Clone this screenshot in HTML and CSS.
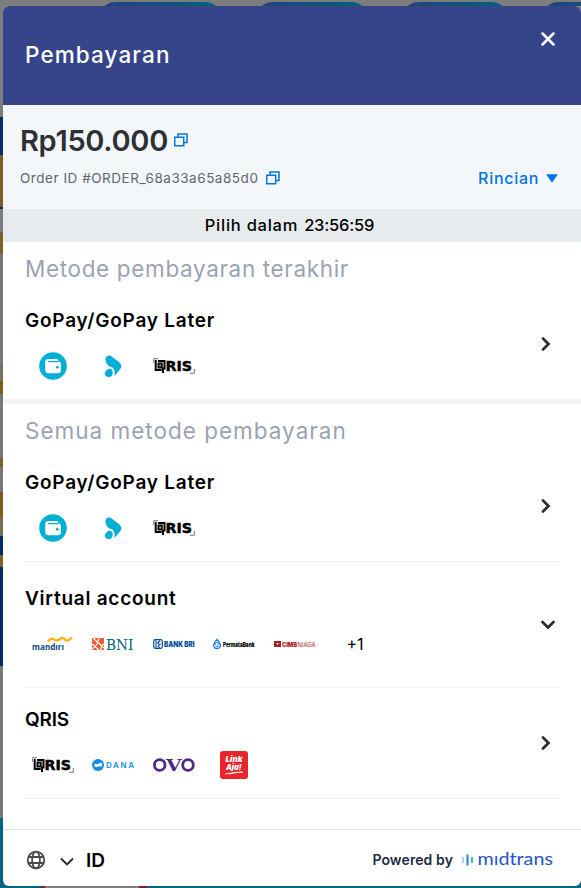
FILE: index.html
```html
<!DOCTYPE html>
<html lang="id">
<head>
    <meta charset="UTF-8">
    <meta name="viewport" content="width=device-width, initial-scale=1.0">
    <title>Pembayaran</title>
    <link rel="stylesheet" href="styles.css">
</head>
<body>
<!-- shared icons -->
<svg class="defs" width="0" height="0">
    <symbol id="copy" viewBox="0 0 14 14">
        <path d="M4 3.500V1h9v8.500h-2.500M.7 4.200h9v8.600h-9z" fill="none" stroke="#0077e0" stroke-width="1.500"/>
    </symbol>
    <symbol id="chevron" viewBox="0 0 16 16">
        <path d="M5 2.500 10.500 8 5 13.500" fill="none" stroke="#2b2d33" stroke-width="2.700" stroke-linecap="round"/>
    </symbol>
    <symbol id="gopay" viewBox="0 0 28 28">
        <circle cx="14" cy="14" r="13.800" fill="#00aed6"/>
        <path d="M9.500 7h8q2 0 2 2.300 2.500.300 2.500 3v5.500q0 3.500-3.500 3.500H9.700q-3.500 0-3.500-3.500v-7.500Q6.200 7 9.500 7z" fill="#fff"/>
        <path d="M9.500 9.700h9.500" stroke="#00aed6" stroke-width="1.200" stroke-linecap="round"/>
        <circle cx="18.300" cy="15.300" r="1.400" fill="#00aed6"/>
    </symbol>
    <symbol id="later" viewBox="0 0 18 22">
        <path d="M1.500 5C1 1.500 4-.5 7 1l8.500 6.500q3.500 3.500.500 7L10.500 21q.800-6.500-2.500-8.700Q2.500 11.500 1.500 5z" fill="#00aed6"/>
        <path d="M5.500 13.500q3.500.500 3.200 4.500-.200 4-4 4-3.700-.300-4-3.500Q2 14.500 5.500 13.500z" fill="#00aed6"/>
    </symbol>
    <symbol id="qris" viewBox="0 0 42 16">
        <path d="M.7 5V.7H5M41.300 11v4.300H37" fill="none" stroke="#777" stroke-width="1"/>
        <path d="M2.700 2v10h6M5 3h6.500v8.500M5.500 5.500v4h3.200v-4z M10 9.500V15" fill="none" stroke="#000" stroke-width="2"/>
        <text x="12.500" y="13" textLength="26.500" lengthAdjust="spacingAndGlyphs" class="qris-text">RIS</text>
    </symbol>
</svg>

<!-- page buttons peeking out above the dialog -->
<div class="pills">
    <i></i><i></i><i></i><i></i>
</div>

<div class="modal">
    <header class="header">
        <h1>Pembayaran</h1>
        <svg class="close" viewBox="0 0 14 14"><path d="M1.500 1.500l11 11M12.500 1.500l-11 11" stroke="#fff" stroke-width="2.500" stroke-linecap="round"/></svg>
    </header>

    <section class="summary">
        <div class="amount"><span>Rp150.000</span><svg class="copy"><use href="#copy"/></svg></div>
        <div class="order">
            <span class="order-id">Order ID #ORDER_68a33a65a85d0</span><svg class="copy"><use href="#copy"/></svg>
            <a class="detail"><span>Rincian</span><svg width="12" height="9" viewBox="0 0 12 9"><path d="M1 .8h10L6 8z" fill="#0077e0" stroke="#0077e0" stroke-linejoin="round"/></svg></a>
        </div>
    </section>

    <div class="timer"><span>Pilih dalam</span><span class="time">23:56:59</span></div>

    <main>
        <section class="group recent">
            <h2>Metode pembayaran terakhir</h2>
            <div class="method">
                <div>
                    <h3>GoPay/GoPay Later</h3>
                    <div class="logos">
                        <svg class="round"><use href="#gopay"/></svg>
                        <svg class="later"><use href="#later"/></svg>
                        <svg class="qris"><use href="#qris"/></svg>
                    </div>
                </div>
                <svg class="chevron"><use href="#chevron"/></svg>
            </div>
        </section>

        <section class="group">
            <h2 class="all">Semua metode pembayaran</h2>
            <div class="method">
                <div>
                    <h3>GoPay/GoPay Later</h3>
                    <div class="logos">
                        <svg class="round"><use href="#gopay"/></svg>
                        <svg class="later"><use href="#later"/></svg>
                        <svg class="qris"><use href="#qris"/></svg>
                    </div>
                </div>
                <svg class="chevron"><use href="#chevron"/></svg>
            </div>

            <div class="method bank">
                <div>
                    <h3>Virtual account</h3>
                    <div class="logos">
                        <svg class="logo" viewBox="0 0 42 16">
                            <path d="M16 5.500q3-4 6-2t6-.500 5 .500 7-2" fill="none" stroke="#fcb017" stroke-width="2.400"/>
                            <text x="0" y="13.500" textLength="32" lengthAdjust="spacingAndGlyphs" class="mandiri">mandırı</text>
                        </svg>
                        <svg class="logo" viewBox="0 0 42 16">
                            <path d="M0 2h12v12H0z" fill="#f15a33"/>
                            <path d="M1 2l11 10M0 8l7 6M7 2Q6 9 0 13M9 14q0-5 3-6" stroke="#fff" stroke-width="1.100" fill="none"/>
                            <text x="14" y="13.500" textLength="27.500" lengthAdjust="spacingAndGlyphs" class="bni">BNI</text>
                        </svg>
                        <svg class="logo" viewBox="0 0 42 16">
                            <rect x=".7" y="3.700" width="8.600" height="8.600" rx="1.500" fill="#fff" stroke="#00529c" stroke-width="1.200"/>
                            <path d="M3 4v8M7 4.500 4.500 7 7 8.500 5 10l2 2" stroke="#00529c" fill="none" stroke-width="1.100"/>
                            <text x="11" y="10.800" textLength="30.500" lengthAdjust="spacingAndGlyphs" class="bri">BANK BRI</text>
                        </svg>
                        <svg class="logo" viewBox="0 0 42 16">
                            <path d="M4 3.500Q-.2 8 .7 10.300 2 12.500 4 12.500t3.300-2.200Q8.200 8 4 3.500z" fill="#fff" stroke="#1478ff" stroke-width="1.300"/>
                            <path d="M2 8l2 3 2-3-2-2z" fill="none" stroke="#1478ff" stroke-width=".8"/>
                            <text x="10" y="10.700" textLength="31.500" lengthAdjust="spacingAndGlyphs" class="permata">PermataBank</text>
                        </svg>
                        <svg class="logo" viewBox="0 0 42 16">
                            <path d="M0 5h7v6H0z" fill="#a71b26"/><path d="M2 7h3L3.500 9z" fill="#fff"/>
                            <text x="8" y="10.600" textLength="15" lengthAdjust="spacingAndGlyphs" class="cimb">CIMB</text>
                            <text x="23.500" y="10.600" textLength="18" lengthAdjust="spacingAndGlyphs" class="niaga">NIAGA</text>
                        </svg>
                        <span class="more">+1</span>
                    </div>
                </div>
                <svg class="chevron down"><use href="#chevron"/></svg>
            </div>

            <div class="method wallet">
                <div>
                    <h3>QRIS</h3>
                    <div class="logos">
                        <svg class="qris"><use href="#qris"/></svg>
                        <svg class="logo" viewBox="0 0 42 16">
                            <circle cx="6" cy="8" r="6" fill="#118eea"/>
                            <path d="M2.500 6.500q2.500 1.500 5-.300 1.500-.700 2.500 0v3.300q-2.300-.800-4.500.300-1.700.600-3-.300z" fill="#fff"/>
                            <text x="14" y="11" textLength="28" class="dana">DANA</text>
                        </svg>
                        <svg class="logo" viewBox="0 0 42 16">
                            <g fill="none" stroke="#4c2a86" stroke-width="2.800"><circle cx="6.700" cy="8" r="5.300"/><circle cx="35" cy="8" r="5.300"/></g>
                            <text x="13" y="13.700" textLength="15.500" lengthAdjust="spacingAndGlyphs" class="ovo">V</text>
                        </svg>
                        <svg class="round" viewBox="0 0 28 28">
                            <rect width="28" height="28" rx="3" fill="#e8252b"/>
                            <text x="5.500" y="10.700" textLength="17" lengthAdjust="spacingAndGlyphs" class="aja">Link</text>
                            <text x="6" y="19" textLength="15.500" lengthAdjust="spacingAndGlyphs" class="aja">Aja!</text>
                            <path d="M5 23q9-2 18-2-9 .700-14 2" fill="none" stroke="#fff" stroke-width=".8"/>
                        </svg>
                    </div>
                </div>
                <svg class="chevron"><use href="#chevron"/></svg>
            </div>
        </section>
    </main>

    <footer class="footer">
        <svg class="globe" viewBox="0 0 20 20"><g fill="none" stroke="#4a4a4a" stroke-width="1.800"><circle cx="10" cy="10" r="8.300"/><ellipse cx="10" cy="10" rx="3.900" ry="8.300"/><path d="M2.500 7h15M2.500 13h15"/></g></svg>
        <svg class="caret" viewBox="0 0 14 9"><path d="M1 1.500l6 6 6-6" fill="none" stroke="#222b38" stroke-width="1.900"/></svg>
        <span class="lang">ID</span>
        <span class="powered">Powered by</span>
        <svg class="midtrans" viewBox="0 0 92 16">
            <path d="M1 5v6" stroke="#8fd0f5" stroke-width="1.700"/>
            <path d="M5.500 2.500v11" stroke="#2a7fc4" stroke-width="2"/>
            <path d="M10 5v6" stroke="#10b7e8" stroke-width="1.800"/>
            <text x="15.500" y="12.500" textLength="75.500" lengthAdjust="spacingAndGlyphs">mıdtrans</text>
        </svg>
    </footer>
</div>
</body>
</html>
```
FILE: styles.css
```css
* {
    margin: 0; padding: 0; box-sizing: border-box;
}

body {
    height: 888px;
    padding: 0 0 2px 3px;
    overflow: hidden;
    font-family: Inter, "Open Sans", sans-serif;
    color: #000;
    /* dimmed page behind the dialog */
    background:
        linear-gradient(90deg, transparent 41px, #7d1f24 41px 45px, #7d7d80 45px 139px, #7d1f24 139px 147px, transparent 147px) 0 886px / 100% 2px no-repeat,
        linear-gradient(#7d7d7d 117px, #002e68 117px 155px, #7d5d24 155px 207px, #0a2b55 207px 209px, #7d7d80 209px 232px, #80602a 232px 254px, #77777c 254px 363px, #7b705f 363px 381px, #805c1c 381px 394px, #77777c 394px 458px, #80602a 458px 467px, #77777c 467px 492px, #805c1c 492px 517px, #776b59 517px 536px, #002c62 536px 555px, #80602a 555px 567px, #002b63 567px 666px, #77777c 666px 818px, #00657f 818px);
}

h1, h2, h3 {
    white-space: nowrap;
}

svg {
    flex: none;
    overflow: visible;
}

.defs {
    display: none;
}

.pills {
    height: 6px;
    padding: 2px 0 0 95px;
    display: grid;
    grid-template-columns: 125px 114px 108px 120px;
    column-gap: 32px;
    overflow: hidden;
}

.pills i {
    height: 40px;
    border-radius: 18px;
    background: linear-gradient(90deg, #273f7a, #006482);
}

.modal {
    height: 880px;
    display: flex;
    flex-direction: column;
    background-color: #fff;
    border-radius: 6px;
    overflow: hidden;
}

.header {
    height: 99px;
    padding: 0 26px 0 22px;
    display: flex;
    justify-content: space-between;
    background-color: #364589;
    color: #fff;
}

.header h1 {
    font-size: 22.5px;
    font-weight: 500;
    line-height: 97px;
    letter-spacing: 1.1px;
}

.close {
    width: 14px;
    height: 14px;
    margin-top: 26px;
}

.summary {
    height: 104px;
    padding: 15px 23px 0 17px;
    background-color: #f3f7fa;
}

.amount {
    height: 40px;
    display: flex;
    align-items: center;
    gap: 6px;
    color: #2e3035;
    font-size: 29px;
    font-weight: 600;
    letter-spacing: -0.3px;
}

.copy {
    width: 14px;
    height: 14px;
}

.order {
    height: 36px;
    display: flex;
    align-items: center;
    color: #61656f;
    font-size: 13.5px;
}

.order-id {
    width: 246px;
    letter-spacing: 0.53px;
    white-space: nowrap;
}

.detail {
    margin-left: auto;
    display: flex;
    align-items: center;
    gap: 7px;
    color: #0077e0;
    font-size: 16px;
    font-weight: 500;
    letter-spacing: 0.7px;
}

.timer {
    height: 33px;
    padding: 0 5px 2px 0;
    display: flex;
    justify-content: center;
    align-items: center;
    gap: 6px;
    background-color: #e8ebed;
    font-size: 16.5px;
    font-weight: 500;
    letter-spacing: 0.75px;
}

.time {
    letter-spacing: -0.2px;
}

main {
    flex: 1;
}

.group {
    padding: 0 22px;
}

.recent {
    height: 162px;
    border-bottom: 5px solid #f2f4f6;
}

.group h2 {
    height: 43px;
    padding-top: 11px;
    color: #9da2b0;
    font-size: 22.5px;
    font-weight: 400;
    line-height: 32px;
    letter-spacing: 0.65px;
}

.group .all {
    letter-spacing: 1px;
}

.method {
    height: 115px;
    padding: 21px 5px 0 0;
    display: flex;
    justify-content: space-between;
    border-bottom: 1px solid #eff0f2;
}

.recent .method {
    height: 114px;
    border-bottom: 0;
}

.method h3 {
    font-size: 19px;
    font-weight: 600;
    line-height: 30px;
    letter-spacing: 0.75px;
}

.method .chevron {
    width: 16px;
    height: 16px;
    margin-top: 30px;
}

.logos {
    display: grid;
    grid-template-columns: repeat(6, 42px);
    column-gap: 18.5px;
    margin: 16px 0 0 6.5px;
    height: 28px;
    align-items: center;
    justify-items: center;
}

.logo, .qris {
    width: 42px;
    height: 16px;
}

.round {
    width: 28px;
    height: 28px;
}

.later {
    width: 18px;
    height: 22px;
}

.more {
    font-size: 16px;
}

.bank {
    height: 126px;
    padding: 22px 3px 0 0;
}

.wallet {
    height: 111px;
    padding-top: 17px;
}

.wallet h3 {
    letter-spacing: -0.2px;
}

.method .down {
    margin-top: 33px;
    transform: rotate(90deg);
}

.qris-text { font: bold 14px "DejaVu Sans"; stroke: #000; stroke-width: 0.5px; }
.mandiri { font: bold 9px "Open Sans"; fill: #0b4779; }
.bni { font: 15px "DejaVu Serif"; fill: #006271; }
.bri { font: 900 7.500px Inter; fill: #00529c; }
.permata { font: 900 6px Inter; fill: #000; }
.cimb { font: 900 6px Inter; fill: #a71b26; }
.niaga { font: 6px Inter; fill: #a71b26; }
.dana { font: 600 8px Inter; fill: #118eea; }
.ovo { font: bold 16px "DejaVu Serif"; fill: #4c2a86; }
.aja { font: italic 900 7.500px Inter; fill: #fff; }

.footer {
    height: 57px;
    padding: 4px 27px 0 23px;
    display: flex;
    align-items: center;
    border-top: 1px solid #dcdfe4;
}

.globe {
    width: 20px;
    height: 20px;
}

.caret {
    width: 14px;
    height: 9px;
    margin: 2px 12px 0 14px;
}

.lang {
    font-size: 19px;
    font-weight: 600;
}

.powered {
    margin: -2px 9px 0 auto;
    color: #1c2b46;
    font-size: 14px;
    font-weight: 600;
    letter-spacing: 0.1px;
}

.midtrans {
    width: 92px;
    height: 16px;
}

.midtrans text {
    font: 18px Lato;
    fill: #2455c5;
}
```
